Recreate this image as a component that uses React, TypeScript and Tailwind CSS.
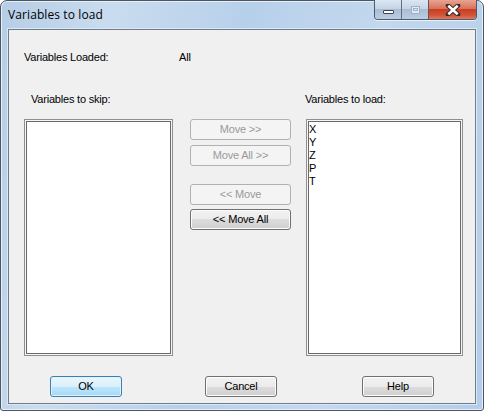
import React from "react";

const font = "font-['Liberation_Sans',Arial,sans-serif]";

function Btn({ label, disabled, def, w }: { label: string; disabled?: boolean; def?: boolean; w: string }) {
  let cls = "";
  if (disabled) {
    cls = "border-[#adb2b5] bg-[#f4f4f4] text-[#9a9a9a]";
  } else if (def) {
    cls = "border-[#3c7fb1] bg-[linear-gradient(to_bottom,#eaf6fd_0%,#d9f0fc_50%,#bee6fd_50%,#a7d9f5_100%)] text-black shadow-[inset_0_0_0_1px_#dff3fd]";
  } else {
    cls = "border-[#707070] bg-[linear-gradient(to_bottom,#f2f2f2_0%,#ebebeb_50%,#dddddd_50%,#cfcfcf_100%)] text-black shadow-[inset_0_0_0_1px_#fcfcfc]";
  }
  return (
    <div className={`${w} h-[21px] rounded-[3px] border flex items-center justify-center text-[11px] leading-none tracking-[-0.2px] ${cls}`}>
      {label}
    </div>
  );
}

function ListBox({ w, items }: { w: string; items?: string[] }) {
  return (
    <div className={`${w} h-[237px] border border-[#8f8f8f] bg-[#f6f6f6] p-px flex`}>
      <div className="flex-1 border border-[#696969] bg-white pl-0 pt-[1px] text-[11px] leading-[13px] text-black">
        {items?.map((it) => (
          <div key={it}>{it}</div>
        ))}
      </div>
    </div>
  );
}

export default function App() {
  return (
    <div className={`w-[484px] h-[411px] bg-white ${font}`}>
      <div className="relative w-[484px] h-[411px] rounded-t-[7px] rounded-b-[3px] border border-[#4c5561] bg-[linear-gradient(100deg,#b5cde6_0%,#c9dcef_20%,#b7d0ea_45%,#c3d8ee_70%,#b4cde8_100%)] flex flex-col px-[7px] pb-[6px] shadow-[inset_0_0_0_1px_#e6f0fa]">
        {/* title bar */}
        <div className="h-[28px] flex items-center pl-[0px] pb-[1px]">
          <span className="font-['Open_Sans',sans-serif] text-[12px] text-black tracking-[0.1px]">Variables to load</span>
        </div>
        {/* caption buttons */}
        <div className="absolute top-[-1px] right-[6px] flex h-[20px] rounded-b-[4px] overflow-hidden border border-t-0 border-[#4e5a68] shadow-[0_1px_0_#e8f1fa]">
          <div className="w-[27px] h-full border-r border-[#5f6e80] bg-[linear-gradient(to_bottom,#dbe6f2_0%,#c5d5e6_45%,#a9bdd4_50%,#bccde0_100%)] flex items-center justify-center">
            <div className="w-[11px] h-[4px] mt-[5px] bg-white border border-[#3a4350] rounded-[1px]" />
          </div>
          <div className="w-[27px] h-full border-r border-[#6f5050] bg-[linear-gradient(to_bottom,#dbe6f2_0%,#c5d5e6_45%,#a9bdd4_50%,#bccde0_100%)] flex items-center justify-center">
            <div className="w-[9px] h-[8px] border border-[#9fb1c6] bg-[#e1eaf4] flex items-center justify-center">
              <div className="w-[5px] h-[3px] border border-[#9fb1c6]" />
            </div>
          </div>
          <div className="w-[47px] h-full bg-[linear-gradient(to_bottom,#e8a493_0%,#d9725a_45%,#c7401f_50%,#d2543a_80%,#e07a5e_100%)] flex items-center justify-center">
            <svg width="16" height="12" viewBox="0 0 16 12">
              <path d="M3 1.5 L13 10.5 M13 1.5 L3 10.5" stroke="#3b2a28" strokeWidth="4.6" strokeLinecap="round" />
              <path d="M3.3 1.8 L12.7 10.2 M12.7 1.8 L3.3 10.2" stroke="#ffffff" strokeWidth="2.6" strokeLinecap="butt" />
            </svg>
          </div>
        </div>
        {/* client area */}
        <div className="flex-1 border border-[#6f7c8c] bg-[#f0f0f0] flex flex-col pl-[15px] text-[11px] text-black tracking-[-0.2px] shadow-[0_0_0_1px_#dce8f4]">
          <div className="mt-[21px] h-[13px] leading-[13px] flex">
            <span className="w-[155px]">Variables Loaded:</span>
            <span>All</span>
          </div>
          <div className="mt-[29px] flex">
            <div className="flex flex-col">
              <div className="h-[13px] leading-[13px] pl-[7px] mb-[13px]">Variables to skip:</div>
              <ListBox w="w-[149px]" />
            </div>
            <div className="ml-[17px] mt-[26px] flex flex-col">
              <Btn label="Move >>" disabled w="w-[101px]" />
              <div className="h-[5px]" />
              <Btn label="Move All >>" disabled w="w-[101px]" />
              <div className="h-[18px]" />
              <Btn label="<< Move" disabled w="w-[101px]" />
              <div className="h-[4px]" />
              <Btn label="<< Move All" w="w-[101px]" />
            </div>
            <div className="ml-[15px] flex flex-col">
              <div className="h-[13px] leading-[13px] ml-[-1px] mb-[13px]">Variables to load:</div>
              <ListBox w="w-[157px]" items={["X", "Y", "Z", "P", "T"]} />
            </div>
          </div>
          <div className="mt-[20px] flex">
            <div className="ml-[26px]">
              <Btn label="OK" def w="w-[72px]" />
            </div>
            <div className="ml-[83px]">
              <Btn label="Cancel" w="w-[72px]" />
            </div>
            <div className="ml-[85px]">
              <Btn label="Help" w="w-[72px]" />
            </div>
          </div>
        </div>
      </div>
    </div>
  );
}
